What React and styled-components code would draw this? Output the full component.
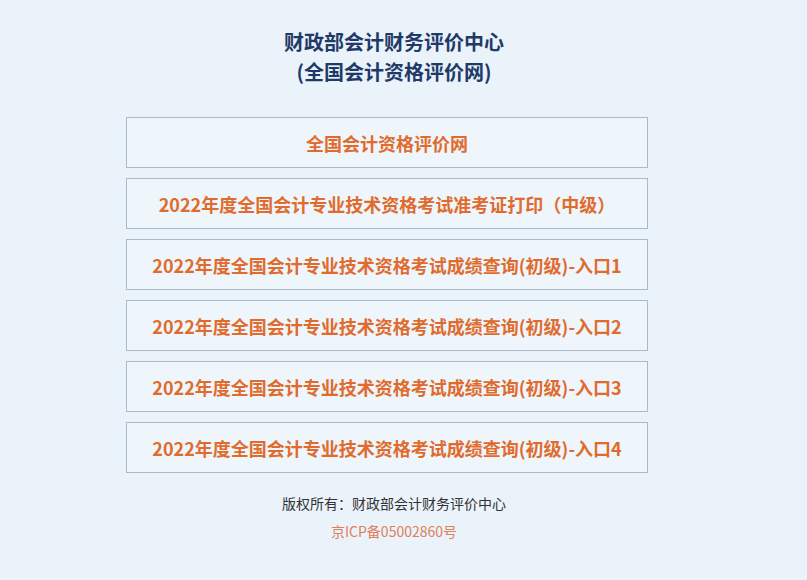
import React from "react";
import styled, { createGlobalStyle } from "styled-components";

const GlobalStyle = createGlobalStyle`
  html, body {
    margin: 0;
    padding: 0;
    background: #eaf2fa;
  }
  body {
    font-family: "Noto Sans CJK SC", "Noto Sans", sans-serif;
  }
`;

const links = [
  "全国会计资格评价网",
  "2022年度全国会计专业技术资格考试准考证打印（中级）",
  "2022年度全国会计专业技术资格考试成绩查询(初级)-入口1",
  "2022年度全国会计专业技术资格考试成绩查询(初级)-入口2",
  "2022年度全国会计专业技术资格考试成绩查询(初级)-入口3",
  "2022年度全国会计专业技术资格考试成绩查询(初级)-入口4",
];

const App = () => {
  return (
    <Page>
      <GlobalStyle />
      <Wrapper>
        <Header>
          <div>财政部会计财务评价中心</div>
          <div>(全国会计资格评价网)</div>
        </Header>
        <LinkList>
          {links.map((text) => (
            <LinkBox key={text}>{text}</LinkBox>
          ))}
        </LinkList>
        <Footer>
          <Copyright>版权所有：财政部会计财务评价中心</Copyright>
          <Icp>京ICP备05002860号</Icp>
        </Footer>
      </Wrapper>
    </Page>
  );
};

export default App;

const Page = styled.div`
  width: 807px;
  height: 580px;
  background: #eaf2fa;
  overflow: hidden;
`;

const Wrapper = styled.div`
  width: 522px;
  margin-left: 126px;
  padding-top: 27px;
  display: flex;
  flex-direction: column;
`;

const Header = styled.div`
  padding-left: 14px;
  text-align: center;
  font-size: 20px;
  font-weight: 700;
  line-height: 30px;
  color: #1f3a68;
  margin-bottom: 30px;
`;

const LinkList = styled.div`
  display: flex;
  flex-direction: column;
  gap: 10px;
`;

const LinkBox = styled.div`
  height: 49px;
  border: 1px solid #a9bacb;
  background: #eef5fb;
  display: flex;
  align-items: center;
  justify-content: center;
  font-size: 18px;
  font-weight: 700;
  color: #e06b2d;
  white-space: nowrap;
`;

const Footer = styled.div`
  margin-top: 16px;
  padding-left: 14px;
  text-align: center;
  font-size: 14px;
  line-height: 28px;
`;

const Copyright = styled.div`
  color: #333333;
`;

const Icp = styled.div`
  color: #e0805a;
`;
